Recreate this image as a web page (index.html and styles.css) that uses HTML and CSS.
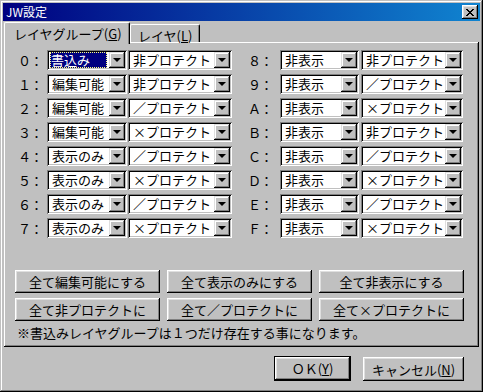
FILE: index.html
```html
<!DOCTYPE html>
<html lang="ja">
<head>
<meta charset="utf-8">
<title>JW設定</title>
<link rel="stylesheet" href="styles.css">
</head>
<body>
<div class="window">
  <div class="titlebar">
    <span class="title">JW設定</span>
    <span class="close">
      <svg width="8" height="7" viewBox="0 0 8 7" shape-rendering="crispEdges">
        <rect x="0" y="0" width="2" height="1"/><rect x="6" y="0" width="2" height="1"/>
        <rect x="1" y="1" width="2" height="1"/><rect x="5" y="1" width="2" height="1"/>
        <rect x="2" y="2" width="4" height="1"/>
        <rect x="3" y="3" width="2" height="1"/>
        <rect x="2" y="4" width="4" height="1"/>
        <rect x="1" y="5" width="2" height="1"/><rect x="5" y="5" width="2" height="1"/>
        <rect x="0" y="6" width="2" height="1"/><rect x="6" y="6" width="2" height="1"/>
      </svg>
    </span>
  </div>
  <div class="tabs">
    <div class="tab active">レイヤグループ(<u>G</u>)</div>
    <div class="tab">レイヤ(<u>L</u>)</div>
  </div>
  <div class="panel">
    <div class="layers">
      <div class="col left">
        <div class="row"><span class="lbl">０：</span><div class="combo c1"><span class="val sel">書込み</span><span class="dd"></span></div><div class="combo c2"><span class="val">非プロテクト</span><span class="dd"></span></div></div>
        <div class="row"><span class="lbl">１：</span><div class="combo c1"><span class="val">編集可能</span><span class="dd"></span></div><div class="combo c2"><span class="val">非プロテクト</span><span class="dd"></span></div></div>
        <div class="row"><span class="lbl">２：</span><div class="combo c1"><span class="val">編集可能</span><span class="dd"></span></div><div class="combo c2"><span class="val">／プロテクト</span><span class="dd"></span></div></div>
        <div class="row"><span class="lbl">３：</span><div class="combo c1"><span class="val">編集可能</span><span class="dd"></span></div><div class="combo c2"><span class="val">×プロテクト</span><span class="dd"></span></div></div>
        <div class="row"><span class="lbl">４：</span><div class="combo c1"><span class="val">表示のみ</span><span class="dd"></span></div><div class="combo c2"><span class="val">／プロテクト</span><span class="dd"></span></div></div>
        <div class="row"><span class="lbl">５：</span><div class="combo c1"><span class="val">表示のみ</span><span class="dd"></span></div><div class="combo c2"><span class="val">×プロテクト</span><span class="dd"></span></div></div>
        <div class="row"><span class="lbl">６：</span><div class="combo c1"><span class="val">表示のみ</span><span class="dd"></span></div><div class="combo c2"><span class="val">／プロテクト</span><span class="dd"></span></div></div>
        <div class="row"><span class="lbl">７：</span><div class="combo c1"><span class="val">表示のみ</span><span class="dd"></span></div><div class="combo c2"><span class="val">×プロテクト</span><span class="dd"></span></div></div>
      </div>
      <div class="col right">
        <div class="row"><span class="lbl">８：</span><div class="combo c1"><span class="val">非表示</span><span class="dd"></span></div><div class="combo c2"><span class="val">非プロテクト</span><span class="dd"></span></div></div>
        <div class="row"><span class="lbl">９：</span><div class="combo c1"><span class="val">非表示</span><span class="dd"></span></div><div class="combo c2"><span class="val">／プロテクト</span><span class="dd"></span></div></div>
        <div class="row"><span class="lbl">Ａ：</span><div class="combo c1"><span class="val">非表示</span><span class="dd"></span></div><div class="combo c2"><span class="val">×プロテクト</span><span class="dd"></span></div></div>
        <div class="row"><span class="lbl">Ｂ：</span><div class="combo c1"><span class="val">非表示</span><span class="dd"></span></div><div class="combo c2"><span class="val">非プロテクト</span><span class="dd"></span></div></div>
        <div class="row"><span class="lbl">Ｃ：</span><div class="combo c1"><span class="val">非表示</span><span class="dd"></span></div><div class="combo c2"><span class="val">／プロテクト</span><span class="dd"></span></div></div>
        <div class="row"><span class="lbl">Ｄ：</span><div class="combo c1"><span class="val">非表示</span><span class="dd"></span></div><div class="combo c2"><span class="val">×プロテクト</span><span class="dd"></span></div></div>
        <div class="row"><span class="lbl">Ｅ：</span><div class="combo c1"><span class="val">非表示</span><span class="dd"></span></div><div class="combo c2"><span class="val">／プロテクト</span><span class="dd"></span></div></div>
        <div class="row"><span class="lbl">Ｆ：</span><div class="combo c1"><span class="val">非表示</span><span class="dd"></span></div><div class="combo c2"><span class="val">×プロテクト</span><span class="dd"></span></div></div>
      </div>
    </div>
    <div class="actions">
      <button class="btn">全て編集可能にする</button>
      <button class="btn">全て表示のみにする</button>
      <button class="btn">全て非表示にする</button>
      <button class="btn">全て非プロテクトに</button>
      <button class="btn">全て／プロテクトに</button>
      <button class="btn">全て×プロテクトに</button>
    </div>
    <p class="note">※書込みレイヤグループは１つだけ存在する事になります。</p>
  </div>
  <div class="footer">
    <button class="btn ok">ＯＫ(<u>Y</u>)</button>
    <button class="btn cancel">キャンセル(<u>N</u>)</button>
  </div>
</div>
</body>
</html>
```
FILE: styles.css
```css
html, body {
  margin: 0;
  padding: 0;
  background: #c0c0c0;
}
body {
  font-family: "Noto Sans CJK JP", "Noto Sans", sans-serif;
  font-size: 13px;
  line-height: 1;
  color: #000;
}
.window {
  width: 483px;
  height: 392px;
  box-sizing: border-box;
  padding: 3px;
  background: #c0c0c0;
  box-shadow: inset -1px -1px #000, inset 1px 1px #c0c0c0, inset -2px -2px #808080, inset 2px 2px #fff;
  display: flex;
  flex-direction: column;
}
.titlebar {
  height: 18px;
  flex: none;
  background: linear-gradient(to right, #000080, #1084d0);
  display: flex;
  align-items: center;
  justify-content: space-between;
  padding: 0 2px 0 3px;
}
.title {
  color: #fff;
  font-size: 12px;
  line-height: 14px;
}
.close {
  width: 16px;
  height: 14px;
  box-sizing: border-box;
  background: #c0c0c0;
  box-shadow: inset -1px -1px #000, inset 1px 1px #fff, inset -2px -2px #808080, inset 2px 2px #dfdfdf;
  display: flex;
  align-items: center;
  justify-content: center;
}
.close svg { display: block; fill: #000; margin-left: -1px; }
.tabs {
  height: 21px;
  flex: none;
  display: flex;
  align-items: flex-end;
  padding-left: 1px;
  position: relative;
  z-index: 1;
}
.tab {
  box-sizing: border-box;
  height: 18px;
  padding: 4px 6px 0 7px;
  background: #c0c0c0;
  border-top: 1px solid #fff;
  border-left: 1px solid #fff;
  border-right: 1px solid #000;
  border-radius: 2px 2px 0 0;
  box-shadow: inset -1px 0 #808080;
  line-height: 13px;
  white-space: nowrap;
}
.tab.active {
  height: 22px;
  margin-bottom: -2px;
  width: 126px;
  padding: 4px 0 0 9px;
}
.tab:not(.active) {
  width: 70px;
  padding-left: 7px;
}
.panel {
  flex: none;
  height: 305px;
  margin: 0 1px;
  box-sizing: border-box;
  padding: 8px 0 0 14px;
  box-shadow: inset -1px -1px #000, inset 1px 1px #fff, inset -2px -2px #808080;
}
.layers {
  display: flex;
  gap: 16px;
}
.col {
  display: flex;
  flex-direction: column;
  gap: 4px;
}
.row {
  display: flex;
  align-items: center;
  height: 20px;
}
.lbl {
  width: 29px;
  flex: none;
  letter-spacing: -1px;
}
.right .lbl { width: 32px; }
.combo {
  box-sizing: border-box;
  height: 20px;
  padding: 2px;
  background: #fff;
  box-shadow: inset 1px 1px #808080, inset -1px -1px #fff, inset 2px 2px #000, inset -2px -2px #c0c0c0;
  display: flex;
}
.c1 { width: 80px; margin-right: 1px; }
.c2 { width: 104px; }
.right .c1 { width: 79px; margin-right: 2px; }
.right .c2 { width: 102px; }
.val {
  flex: 1;
  min-width: 0;
  height: 16px;
  line-height: 16px;
  padding-left: 3px;
  white-space: nowrap;
}
.val.sel {
  flex: none;
  width: 57px;
  margin-left: 1px;
  padding-left: 1px;
  box-sizing: border-box;
  background: #000080;
  color: #fff;
  outline: 1px dotted #ffff80;
  outline-offset: -1px;
}
.c1 .val.sel + .dd { margin-left: auto; }
.dd {
  width: 16px;
  height: 16px;
  flex: none;
  box-sizing: border-box;
  background: #c0c0c0;
  box-shadow: inset -1px -1px #000, inset 1px 1px #dfdfdf, inset -2px -2px #808080, inset 2px 2px #fff;
  position: relative;
}
.dd::after {
  content: "";
  position: absolute;
  left: 4px;
  top: 6px;
  border-left: 4px solid transparent;
  border-right: 4px solid transparent;
  border-top: 4px solid #000;
  width: 0;
  height: 0;
}
.actions {
  margin: 32px 0 0 -3px;
  display: grid;
  grid-template-columns: repeat(3, 145px);
  column-gap: 7px;
  row-gap: 5px;
}
.btn {
  font: inherit;
  color: #000;
  height: 23px;
  padding: 0;
  border: 0;
  background: #c0c0c0;
  box-shadow: inset -1px -1px #000, inset 1px 1px #fff, inset -2px -2px #808080, inset 2px 2px #dfdfdf;
  line-height: 13px;
  white-space: nowrap;
}
.note {
  margin: 5px 0 0 -1px;
  line-height: 13px;
  white-space: nowrap;
}
.footer {
  display: flex;
  justify-content: flex-end;
  gap: 12px;
  padding: 9px 16px 0 0;
}
.ok {
  width: 77px;
  height: 25px;
  border: 1px solid #000;
}
.cancel {
  width: 101px;
  height: 24px;
  margin-top: 1px;
}
u { text-decoration: underline; text-underline-offset: 1px; }
```
